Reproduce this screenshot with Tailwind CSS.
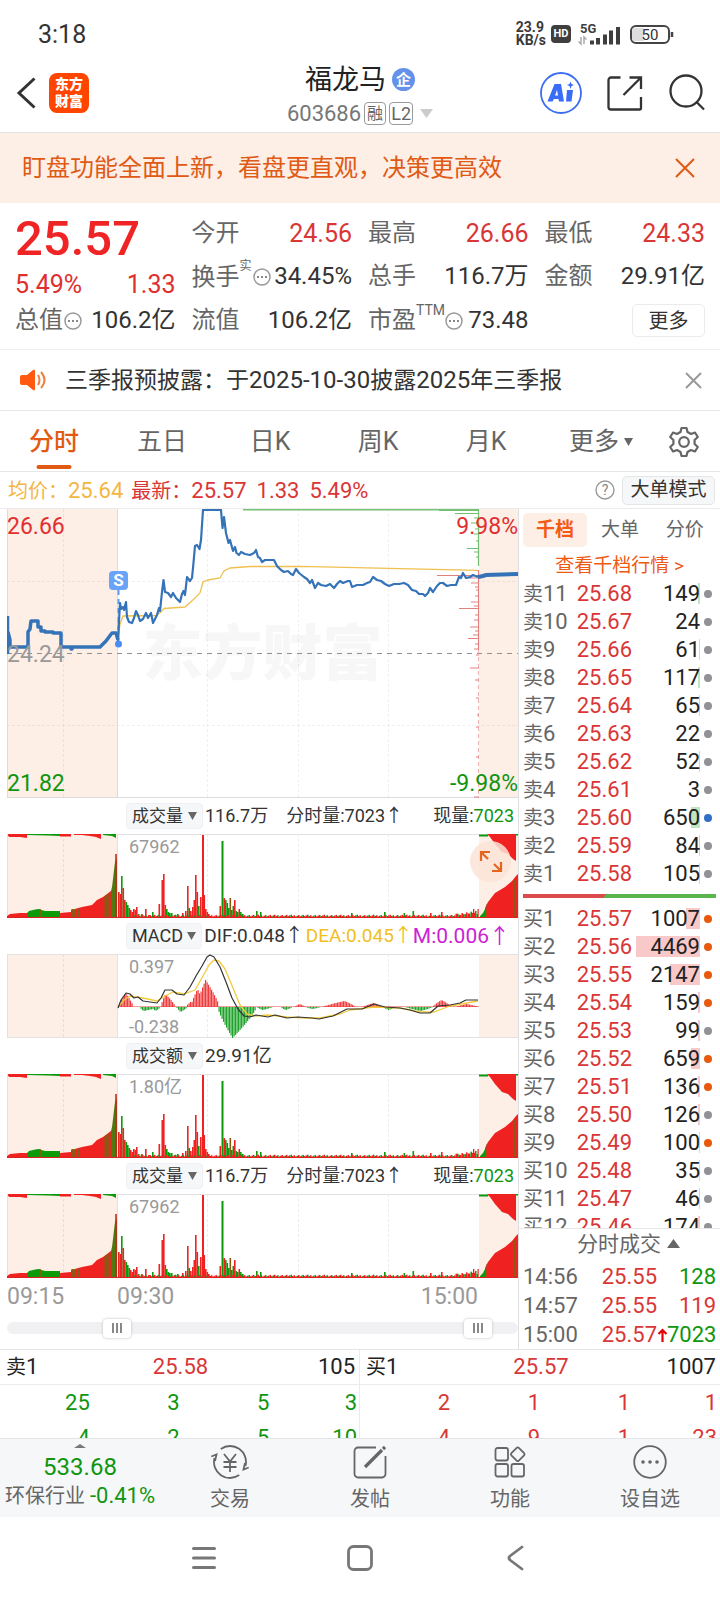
<!DOCTYPE html>
<html lang="zh-CN">
<head>
<meta charset="utf-8">
<meta name="viewport" content="width=device-width, initial-scale=1">
<title>福龙马 603686</title>
<script src="https://cdn.jsdelivr.net/npm/@tailwindcss/browser@4"></script>
</head>
<body class="bg-white text-[#333] font-['Roboto','Noto_Sans_CJK_SC',sans-serif]">
<div class="flex min-h-screen flex-col overflow-hidden">

<!-- Status bar -->
<div class="flex h-[54px] items-end justify-between pr-[45px] pl-[38px]">
  <span class="text-[25px] leading-[38px]">3:18</span>
  <div class="flex items-center gap-[5px] pb-[7px] text-[#3a3a3a]">
    <span class="text-[14px] leading-[13px] font-bold">23.9<br>KB/s</span>
    <span class="flex h-[18px] w-[20px] items-center justify-center rounded-[4px] bg-[#3f3f3f] text-[11px] font-bold text-white">HD</span>
    <svg class="ml-[1px] h-[24px] w-[46px]" viewBox="0 0 46 24" fill="#3f3f3f"><text x="3" y="11" font-size="13" font-weight="700" font-family="Roboto">5G</text><path d="M13 18.500h4v4h-4zM19 16h4v6.500h-4zM26 12.500h4v10h-4zM32 8.500h4v14h-4zM39 5h4v17.500h-4z"/><path d="M4 15v7l-2.500-2.500M7 22v-7l2.500 2.500" fill="none" stroke="#aaa" stroke-width="1.500"/></svg>
    <svg class="ml-[1px] h-[20px] w-[46px]" viewBox="0 0 46 20"><rect x="2" y="2" width="38" height="17" rx="5" fill="none" stroke="#444" stroke-width="2"/><path d="M6 4h9v13H6a3 3 0 0 1-3-3V7a3 3 0 0 1 3-3z" fill="#ddd"/><path d="M43 8v5" stroke="#444" stroke-width="2.500"/><text x="21" y="15.500" font-size="15" text-anchor="middle" fill="#333" font-family="Roboto">50</text></svg>
  </div>
</div>

<!-- Header -->
<header class="grid h-[79px] grid-cols-[1fr_auto_1fr] items-center border-b border-[#e4e4e6] pr-[15px] pl-[15px]">
  <div class="flex items-center gap-[13px]">
    <button aria-label="返回" class="h-[36px] w-[21px]"><svg viewBox="0 0 21 36" class="h-full w-full" fill="none" stroke="#333" stroke-width="3"><path d="M19.500 3.500 4 18l15.500 14.500"/></svg></button>
    <div class="flex h-[40px] w-[40px] items-center justify-center rounded-[8px] bg-[#ff4500] text-center text-[14px] leading-[17px] font-black text-white">东方<br>财富</div>
  </div>
  <div class="flex flex-col items-center pt-[5px]">
    <h1 class="flex items-center gap-[6px] text-[27px] leading-[36px] text-[#222]">福龙马<span class="flex h-[23px] w-[23px] items-center justify-center rounded-full bg-[#6591e8] text-[15px] leading-[20px] font-bold text-white">企</span></h1>
    <div class="flex items-center gap-[3px] text-[22px] leading-[32px] text-[#777]">603686
      <span class="flex h-[23px] w-[22px] items-center justify-center rounded-[4px] border border-[#999] text-[16px] leading-[20px] text-[#666]">融</span>
      <span class="flex h-[23px] w-[24px] items-center justify-center rounded-[4px] border border-[#999] text-[18px] leading-[20px] text-[#666]">L2</span>
      <svg class="ml-[4px] h-[10px] w-[13px]" viewBox="0 0 13 10"><path d="M0 0h13L6.500 9z" fill="#ccc"/></svg>
    </div>
  </div>
  <div class="flex items-center justify-end gap-[25px]">
    <button aria-label="AI" class="h-[42px] w-[42px]"><svg viewBox="0 0 42 42" class="h-full w-full"><circle cx="21" cy="21" r="20" fill="#fff" stroke="#3d6df2" stroke-width="1.800"/><path fill="#3a6cf8" fill-rule="evenodd" d="M14.500 12h6.500L24 29.500h-5l-.5-2.500h-4.500l-1.500 2.500H7.500zM17 18l-2 5.500h3z"/><path fill="#3a6cf8" d="M27 18h6l-1.500 11.500H26zM30.500 9.500l1 2.500 2.500 1-2.500 1-1 3-1-3-2.500-1 2.500-1z"/></svg></button>
    <button aria-label="分享" class="h-[36px] w-[36px]"><svg viewBox="0 0 36 36" class="h-full w-full" fill="none" stroke="#333" stroke-width="2.300"><path d="M13.500 2.500H4A2.500 2.500 0 0 0 1.500 5v27A2.500 2.500 0 0 0 4 34.500h28.500A1.500 1.500 0 0 0 34 33V22M22.500 2.500H34V14M34 2.500 16.500 20"/></svg></button>
    <button aria-label="搜索" class="h-[38px] w-[37px]"><svg viewBox="0 0 37 38" class="h-full w-full" fill="none" stroke="#333" stroke-width="2.300"><circle cx="18" cy="17" r="15.500"/><path d="m28 27.500 8 8"/></svg></button>
  </div>
</header>

<!-- Promo banner -->
<div class="flex h-[70px] items-center justify-between bg-[#fdeee6] pr-[25px] pl-[22px] text-[#e05a14]">
  <p class="text-[24px] leading-[34px]">盯盘功能全面上新，看盘更直观，决策更高效</p>
  <button aria-label="关闭横幅" class="h-[20px] w-[20px]"><svg viewBox="0 0 20 20" class="h-full w-full" stroke="currentColor" stroke-width="2"><path d="m1 1 18 18M19 1 1 19"/></svg></button>
</div>

<!-- Quote summary -->
<section class="grid h-[147px] grid-cols-4 grid-rows-[43px_44px_43px] gap-x-4 border-b border-[#eeeff1] px-[15px] pt-[9px] text-[24px] leading-[43px] text-[#333]">
  <div class="flex items-center pt-[10px] text-[49px] leading-[48px] font-medium text-[#ef2525]">25.57</div>
  <div class="flex justify-between"><span class="text-[#666]">今开</span><span class="text-[25px] text-[#d93636]">24.56</span></div>
  <div class="flex justify-between"><span class="text-[#666]">最高</span><span class="text-[25px] text-[#d93636]">26.66</span></div>
  <div class="flex justify-between"><span class="text-[#666]">最低</span><span class="text-[25px] text-[#d93636]">24.33</span></div>
  <div class="flex justify-between pt-[8px] text-[25px] text-[#e02f2f]"><span>5.49%</span><span>1.33</span></div>
  <div class="flex justify-between"><span class="flex items-center text-[#666]">换手<span class="mb-[22px] text-[12px] leading-[14px]">实</span><svg class="ml-[1px] h-[18px] w-[18px]" viewBox="0 0 18 18"><circle cx="9" cy="9" r="8" fill="none" stroke="#999" stroke-width="1.500"/><path d="M4 8h2v2H4zM8 8h2v2H8zM12 8h2v2h-2z" fill="#888"/></svg></span><span>34.45%</span></div>
  <div class="flex justify-between"><span class="text-[#666]">总手</span><span>116.7万</span></div>
  <div class="flex justify-between"><span class="text-[#666]">金额</span><span>29.91亿</span></div>
  <div class="flex justify-between"><span class="flex items-center text-[#666]">总值<svg class="ml-[1px] h-[18px] w-[18px]" viewBox="0 0 18 18"><circle cx="9" cy="9" r="8" fill="none" stroke="#999" stroke-width="1.500"/><path d="M4 8h2v2H4zM8 8h2v2H8zM12 8h2v2h-2z" fill="#888"/></svg></span><span>106.2亿</span></div>
  <div class="flex justify-between"><span class="text-[#666]">流值</span><span>106.2亿</span></div>
  <div class="flex justify-between"><span class="flex items-center text-[#666]">市盈<span class="mb-[22px] text-[14px] leading-[14px]">TTM</span><svg class="h-[18px] w-[18px]" viewBox="0 0 18 18"><circle cx="9" cy="9" r="8" fill="none" stroke="#999" stroke-width="1.500"/><path d="M4 8h2v2H4zM8 8h2v2H8zM12 8h2v2h-2z" fill="#888"/></svg></span><span>73.48</span></div>
  <div class="flex items-center justify-end"><button class="h-[33px] w-[73px] rounded-[5px] border border-[#ebebed] text-[20px] leading-[30px]">更多</button></div>
</section>

<!-- Notice -->
<div class="flex h-[61px] items-center border-b border-[#e6e7e9] pr-[18px] pl-[20px]">
  <svg class="h-[22px] w-[26px]" viewBox="0 0 26 22"><path d="M2 6h5l6-5q2-1 2 1v18q0 2-2 1l-6-5H2q-2 0-2-2V8q0-2 2-2z" fill="#ff5a10"/><path d="M18 6q3 5 0 10M21 3q7 8 0 16" fill="none" stroke="#f08040" stroke-width="2"/></svg>
  <a href="#" class="ml-[19px] flex-1 pt-[1px] text-[23px] leading-[34px] whitespace-nowrap">三季报预披露：于<span class="text-[24px]">2025-10-30</span>披露<span class="text-[24px]">2025</span>年三季报</a>
  <button aria-label="关闭公告" class="h-[17px] w-[17px]"><svg viewBox="0 0 17 17" class="h-full w-full" stroke="#999" stroke-width="2"><path d="m1 1 15 15M16 1 1 16"/></svg></button>
</div>

<!-- Period tabs -->
<nav class="grid h-[61px] grid-cols-[repeat(6,3fr)_2fr] border-b border-[#e6e7e9] text-[25px] leading-[62px] text-[#666]">
  <button class="relative font-medium text-[#e05a14]">分时<span class="absolute bottom-[4px] left-1/2 h-[4px] w-[35px] -translate-x-1/2 rounded bg-[#e05a14]"></span></button>
  <button>五日</button><button>日K</button><button>周K</button><button>月K</button>
  <button class="flex items-center justify-center gap-[5px] pl-[14px]">更多<svg class="h-[8px] w-[9px]" viewBox="0 0 9 8"><path d="M0 0h9L4.500 8z" fill="#666"/></svg></button>
  <button aria-label="设置" class="flex items-center justify-center"><svg class="h-[32px] w-[32px]" viewBox="0 0 32 32" fill="none" stroke="#666" stroke-width="2.200" stroke-linejoin="round"><path d="M13.500 2h5l1 4 3.500 2 4-1.500 2.800 4.500-3.200 3v4l3.200 3-2.800 4.500-4-1.500-3.500 2-1 4h-5l-1-4L9 24l-4 1.500L2.200 21l3.200-3v-4L2.200 11 5 6.500 9 8l3.500-2z"/><circle cx="16" cy="16" r="4.800"/></svg></button>
</nav>

<!-- Price line -->
<div class="flex h-[37px] items-center border-b border-[#ececee] pr-[5px] pl-[8px] text-[22px] whitespace-nowrap text-[#d93636]">
  <span class="text-[#f3b644]"><span class="text-[20px]">均价：</span>25.64</span>
  <span class="ml-[8px]"><span class="text-[20px]">最新：</span>25.57</span>
  <span class="ml-[10px]">1.33</span><span class="ml-[10px]">5.49%</span>
  <svg class="ml-auto h-[20px] w-[20px]" viewBox="0 0 20 20"><circle cx="10" cy="10" r="9" fill="none" stroke="#999" stroke-width="1.400"/><text x="10" y="15" font-size="14" text-anchor="middle" fill="#888" font-family="Roboto">?</text></svg>
  <button class="ml-[7px] h-[29px] w-[93px] rounded-[5px] border border-[#e4e6ea] bg-[#f6f7f9] text-[19px] leading-[26px] text-[#333]">大单模式</button>
</div>

<!-- Charts and order book -->
<main class="flex h-[840px]">
  <div class="min-w-0 flex-1 border-r border-[#dedfe2] pl-[7px]">

    <div class="relative h-[289px]">
      <div class="absolute inset-x-0 top-[108px] text-center text-[60px] leading-[76px] font-black text-[#f7f7f7]">东方财富</div>
      <svg class="relative h-full w-full" viewBox="7 509 511 289" preserveAspectRatio="none" fill="none">
        <path d="M7 509h111v288H7zM479 509h39v288h-39z" fill="#fdeee6"/>
        <path d="M63.500 509v288M207.500 509v288M298.500 509v288M388.500 509v288M7 581.500h511M7 725.500h511" stroke="#000" stroke-opacity=".06" stroke-dasharray="3 2"/>
        <path d="M7.500 509v288M117.500 509v288M7 797.500h511" stroke="#dcdcdc"/>
        <path d="M7 653.500h511" stroke="#909090" stroke-dasharray="5 5"/>
        <path d="M118 640l2-16 3-8 33-.5 5-3.500 3-3.500 21-1.500 9-8 6-6 3-11 5-2 12-2 4-7 6-3 20-1.500 50-.2 178 4" stroke="#efc04f" stroke-width="1.300"/>
        <path d="M243 509.500h236" stroke="#72c472" stroke-width="2"/>
        <path d="M478.500 509v57M439 510.500h40M455 513.500h24M474 518h5M471 523h8M475 529h4M474 534h5M476 541h3M467 548.500h12M474 552h5M476 557h3" stroke="#75bd75" stroke-width="1.200"/>
        <path d="M478.500 570v80M437 575.500h42M465 578h14M471 583h8M475 587h4M476 590h3M475 596h4M471 602h8M474 606h5M459 608.500h20M475 615h4M474 620h5M470 627h9M475 631h4M473 635h6M468 638.500h11M475 644h4M474 649h5M476 655h3M470 668h9M475 680h4M476 698h3M477 715h2M476 727h3M476 757h3M474 797h5" stroke="#e28080" stroke-width="1.100"/>
        <path d="M478.500 650v148" stroke="#e28080" stroke-opacity=".6" stroke-dasharray="4 3"/>
        <path d="M7.500 616v38M8 632l2 8v7h18v-15l2-3 1-8h7v6h3v4h4v1h8v1h8v14h10v2h1v-2h28l6-6 6-8h4l2 7" stroke="#3473b8" stroke-width="3.500" stroke-linejoin="round"/>
        <path d="M118.500 590v40" stroke="#5c9bf5" stroke-width="2" stroke-dasharray="5 4"/>
        <path d="M118 643L119 621 120 603 121 609 123 607 124 610 126 602 127 617 129 622 132 623 134 618 136 611 138 615 140 621 143 619 146 613 148 618 151 613 153 623 157 615 159 608 160 611 162 592 163.500 580 165 592 168 593 171 597 173 593 176 598 180 602 182 594 183.500 591 185 595 187 577 190 581 192 578 193 568 195 546 197 545 199.500 549 201 540 203 510H221L222.500 528 224 517 226 533 228.500 543 230 540 233 551 235 547 236.500 553 239 555 241 552 245 554 250 555 254 553 256 550 258 557 260 558 262 562 265 560 274 560 277 566 281 570 284 572 288 571 291 574 293 575 296 569 299 573 304 577 307 579 310 583 312 580 315 588 318 583 321 585 326 586 330 584 334 588 337 584 340 581 343 583 348 581 350 581 352 587 357 585 363 585 367 583 370 582 373 577 377 580 381 581 385 584 389 586 394 584 399 584 404 583 408 585 412 590 416 591 419 594 423 594 425 596 428 593 430 588 433 592 437 586 440 583 443 583 447 586 451 585 456 585 459 577 461 578 463 573 466 578 470 577 473 575 478 577" stroke="#3473b8" stroke-width="2.200" stroke-linejoin="round"/>
        <path d="M478 577l5-1 3-1 32-1" stroke="#3473b8" stroke-width="4"/>
        <circle cx="118.500" cy="644" r="3.500" fill="#4b8df2"/>
        <rect x="109" y="571" width="19" height="19" rx="4" fill="#69a4f8"/>
      </svg>
      <span class="absolute top-[62px] left-[102px] w-[19px] text-center text-[17px] leading-[19px] font-bold text-white">S</span>
      <div class="absolute top-[4px] left-0 text-[23px] leading-[28px] text-[#e03030]">26.66</div>
      <div class="absolute top-[4px] right-0 text-[23px] leading-[28px] text-[#e03030]">9.98%</div>
      <div class="absolute top-[132px] left-0 text-[23px] leading-[28px] text-[#999]">24.24</div>
      <div class="absolute bottom-0 left-0 text-[23px] leading-[28px] text-[#109510]">21.82</div>
      <div class="absolute right-0 bottom-0 text-[23px] leading-[28px] text-[#109510]">-9.98%</div>
    </div>

    <div class="flex h-[36px] items-center pr-[4px] pl-[119px] text-[18px] leading-[26px] whitespace-nowrap">
      <button class="flex h-[26px] w-[77px] items-center justify-between rounded-[4px] border border-[#eef0f3] bg-[#f6f7f9] px-[5px] text-[17px]">成交量<svg class="h-[8px] w-[9px]" viewBox="0 0 9 8"><path d="M0 0h9L4.500 8z" fill="#666"/></svg></button>
      <span class="ml-[2px]">116.7万</span><span class="ml-[18px]">分时量:7023↑</span><span class="ml-auto">现量:<span class="text-[#109510]">7023</span></span>
    </div>
    <div class="relative h-[84px]">
      <svg class="volume h-full w-full" viewBox="7 0 511 84" preserveAspectRatio="none"></svg>
      <span class="absolute top-[2px] left-[122px] text-[18px] leading-[22px] text-[#999]">67962</span>
      <button aria-label="全屏" class="absolute top-[7px] right-[7px] h-[41px] w-[41px] rounded-full bg-[#fbe3d6]/85"><svg viewBox="0 0 41 41" class="h-full w-full" fill="none" stroke="#e4651b" stroke-width="2.200"><path d="M11 20v-9h9M11 11l7 7M31 21v9h-9M31 30l-7-7"/></svg></button>
    </div>

    <div class="flex h-[36px] items-center pr-[8px] pl-[119px] text-[19px] leading-[26px] whitespace-nowrap">
      <button class="flex h-[26px] w-[77px] items-center justify-between rounded-[4px] border border-[#eef0f3] bg-[#f6f7f9] px-[5px] text-[18px]">MACD<svg class="h-[8px] w-[9px]" viewBox="0 0 9 8"><path d="M0 0h9L4.500 8z" fill="#666"/></svg></button>
      <span class="ml-[2px]">DIF:0.048↑</span><span class="ml-[2px] text-[#f0bf22]">DEA:0.045↑</span><span class="ml-auto text-[21px] text-[#cc22d4]">M:0.006↑</span>
    </div>
    <div class="relative h-[84px]">
      <svg class="h-full w-full" viewBox="7 954 511 84" preserveAspectRatio="none" fill="none">
        <path d="M7 954h111v84H7zM479 954h39v84h-39z" fill="#fdeee6"/>
        <path d="M63.500 954v84M207.500 954v84M298.500 954v84M388.500 954v84" stroke="#000" stroke-opacity=".07" stroke-dasharray="3 2"/>
        <path d="M7 954.500h511M7 1037.500h511M7.500 954v84M117.500 954v84" stroke="#e2e2e2"/>
        <g id="macd-bars"></g>
        <path d="M118 1007l6-7 6-4 13 2 14 3 8-5 8-4 11 2 11-4 8-14 6-11 5-5 5 1 6 8 8 19 7 17 7 9 9 2 12-1 19 2 18 1 15 0 20-4 10-4 24-3 26 1 20 4 14 0 16-6 28-5" stroke="#f2cb3c" stroke-width="1.300" stroke-linejoin="round"/>
        <path d="M118 1008l3-8 5-7 4 1 4 4 4-1 5 4 7 1 7 1 4-5 4-8 7 0 5 4 7 1 6-8 6-11 6-10 5-9 3-2 4 2 6 10 6 15 6 16 6 11 6 7 6 1 6-2 12 2 7-2 12 3 11-1 14 1 7 1 14-3 14-7 15 0 12-5 11 3 15 1 10 2 10 3 10 0 8-7 12-1 10-2 6-3 12 0" stroke="#333" stroke-width="1.200" stroke-linejoin="round"/>
      </svg>
      <span class="absolute top-[2px] left-[122px] text-[18px] leading-[22px] text-[#999]">0.397</span>
      <span class="absolute bottom-0 left-[122px] text-[18px] leading-[22px] text-[#999]">-0.238</span>
    </div>

    <div class="flex h-[36px] items-center pl-[119px] text-[19px] leading-[26px] whitespace-nowrap">
      <button class="flex h-[26px] w-[77px] items-center justify-between rounded-[4px] border border-[#eef0f3] bg-[#f6f7f9] px-[5px] text-[17px]">成交额<svg class="h-[8px] w-[9px]" viewBox="0 0 9 8"><path d="M0 0h9L4.500 8z" fill="#666"/></svg></button>
      <span class="ml-[2px]">29.91亿</span>
    </div>
    <div class="relative h-[84px]">
      <svg class="volume h-full w-full" viewBox="7 0 511 84" preserveAspectRatio="none"></svg>
      <span class="absolute top-[2px] left-[122px] text-[18px] leading-[22px] text-[#999]">1.80亿</span>
    </div>

    <div class="flex h-[36px] items-center pr-[4px] pl-[119px] text-[18px] leading-[26px] whitespace-nowrap">
      <button class="flex h-[26px] w-[77px] items-center justify-between rounded-[4px] border border-[#eef0f3] bg-[#f6f7f9] px-[5px] text-[17px]">成交量<svg class="h-[8px] w-[9px]" viewBox="0 0 9 8"><path d="M0 0h9L4.500 8z" fill="#666"/></svg></button>
      <span class="ml-[2px]">116.7万</span><span class="ml-[18px]">分时量:7023↑</span><span class="ml-auto">现量:<span class="text-[#109510]">7023</span></span>
    </div>
    <div class="relative h-[84px]">
      <svg class="volume h-full w-full" viewBox="7 0 511 84" preserveAspectRatio="none"></svg>
      <span class="absolute top-[2px] left-[122px] text-[18px] leading-[22px] text-[#999]">67962</span>
    </div>

    <div class="flex h-[38px] pr-[40px] text-[23px] leading-[38px] text-[#999]">
      <span class="w-[110px]">09:15</span><span>09:30</span><span class="ml-auto">15:00</span>
    </div>
    <div class="relative flex h-[24px] items-center">
      <div class="h-[12px] w-full rounded-full bg-[#f1f1f4]"></div>
      <input type="range" aria-label="开始时间" min="0" max="1000" value="198" class="pointer-events-none absolute inset-0 h-[24px] w-full appearance-none bg-transparent [&::-webkit-slider-thumb]:pointer-events-auto [&::-webkit-slider-thumb]:h-[19px] [&::-webkit-slider-thumb]:w-[28px] [&::-webkit-slider-thumb]:appearance-none [&::-webkit-slider-thumb]:rounded-[4px] [&::-webkit-slider-thumb]:bg-white [&::-webkit-slider-thumb]:bg-[linear-gradient(90deg,#888_2px,transparent_2px,transparent_4px,#888_4px,#888_6px,transparent_6px,transparent_8px,#888_8px)] [&::-webkit-slider-thumb]:bg-[length:10px_10px] [&::-webkit-slider-thumb]:bg-center [&::-webkit-slider-thumb]:bg-no-repeat [&::-webkit-slider-thumb]:shadow-[0_0_3px_#bbb]">
      <input type="range" aria-label="结束时间" min="0" max="1000" value="946" class="pointer-events-none absolute inset-0 h-[24px] w-full appearance-none bg-transparent [&::-webkit-slider-thumb]:pointer-events-auto [&::-webkit-slider-thumb]:h-[19px] [&::-webkit-slider-thumb]:w-[28px] [&::-webkit-slider-thumb]:appearance-none [&::-webkit-slider-thumb]:rounded-[4px] [&::-webkit-slider-thumb]:bg-white [&::-webkit-slider-thumb]:bg-[linear-gradient(90deg,#888_2px,transparent_2px,transparent_4px,#888_4px,#888_6px,transparent_6px,transparent_8px,#888_8px)] [&::-webkit-slider-thumb]:bg-[length:10px_10px] [&::-webkit-slider-thumb]:bg-center [&::-webkit-slider-thumb]:bg-no-repeat [&::-webkit-slider-thumb]:shadow-[0_0_3px_#bbb]">
    </div>
  </div>

  <!-- Order book -->
  <aside class="flex w-[201px] shrink-0 flex-col">
    <div class="grid h-[42px] shrink-0 grid-cols-3 items-center pr-[3px] pl-[4px] text-[19px] text-[#666]">
      <button class="h-[34px] w-[64px] rounded-[5px] bg-[#fdeee6] font-bold text-[#f55a14]">千档</button>
      <button>大单</button><button>分价</button>
    </div>
    <a href="#" class="h-[29px] shrink-0 text-center text-[19px] leading-[29px] text-[#ee5a14]">查看千档行情 &gt;</a>
    <table class="w-full table-fixed text-[22px] leading-[28px]"><tbody id="asks"></tbody></table>
    <div class="mx-[4px] mt-[6px] mb-[7px] flex h-[4px] shrink-0 bg-[#5bb54e]"><span class="w-[83px] bg-[#dc4b4b] [clip-path:polygon(0_0,100%_0,97%_100%,0_100%)]"></span></div>
    <div class="min-h-0 flex-1 overflow-hidden"><table class="w-full table-fixed text-[22px] leading-[28px]"><tbody id="bids"></tbody></table></div>
    <button class="flex h-[34px] shrink-0 items-start justify-center gap-[6px] border-t border-[#e6e7e9] pl-[18px] text-[21px] leading-[30px] text-[#666]">分时成交<svg class="mt-[10px] h-[9px] w-[13px]" viewBox="0 0 13 9"><path d="M0 9h13L6.500 0z" fill="#666"/></svg></button>
    <table class="w-full shrink-0 table-fixed text-[22px] leading-[29px] text-[#d93636]"><tbody>
      <tr><td class="w-[60px] pl-[4px] text-[#666]">14:56</td><td class="w-[78px] text-right">25.55</td><td class="pr-[4px] text-right text-[#109510]">128</td></tr>
      <tr><td class="pl-[4px] text-[#666]">14:57</td><td class="text-right">25.55</td><td class="pr-[4px] text-right">119</td></tr>
      <tr><td class="pl-[4px] text-[#666]">15:00</td><td class="text-right">25.57</td><td class="pr-[4px] text-[#109510]"><span class="flex items-center justify-between"><svg class="ml-[1px] h-[14px] w-[9px] shrink-0" viewBox="0 0 9 14" fill="none" stroke="#e60000" stroke-width="2.200"><path d="M4.500 14V2M.500 6l4-4 4 4"/></svg>7023</span></td></tr>
    </tbody></table>
  </aside>
</main>

<!-- Queue detail -->
<section class="grid h-[89px] grid-cols-2 overflow-hidden border-t border-[#e4e5e8] text-[22px] leading-[34px]">
  <div class="border-r border-[#eaebed]">
    <div class="grid grid-cols-3 border-b border-[#ebecee] pr-[4px] pl-[6px] text-[#222]"><span class="text-[20px]">卖<span class="text-[22px]">1</span></span><span class="text-center text-[#d93636]">25.58</span><span class="text-right">105</span></div>
    <table class="w-full table-fixed text-right leading-[35px] text-[#109510]"><tbody>
      <tr><td>25</td><td>3</td><td>5</td><td class="pr-[2px]">3</td></tr>
      <tr><td>4</td><td>2</td><td>5</td><td class="pr-[2px]">10</td></tr>
    </tbody></table>
  </div>
  <div>
    <div class="grid grid-cols-3 border-b border-[#ebecee] pr-[4px] pl-[6px] text-[#222]"><span class="text-[20px]">买<span class="text-[22px]">1</span></span><span class="text-center text-[#d93636]">25.57</span><span class="text-right">1007</span></div>
    <table class="w-full table-fixed text-right leading-[35px] text-[#d93636]"><tbody>
      <tr><td>2</td><td>1</td><td>1</td><td class="pr-[3px]">1</td></tr>
      <tr><td>4</td><td>9</td><td>1</td><td class="pr-[3px]">23</td></tr>
    </tbody></table>
  </div>
</section>

<!-- Bottom toolbar -->
<nav class="grid h-[79px] grid-cols-[8fr_7fr_7fr_7fr_7fr] border-t border-[#e2e4e8] bg-[#f6f7f9] text-[20px] leading-[28px] whitespace-nowrap text-[#666]">
  <button class="flex flex-col items-center pt-[5px]"><svg class="h-[4px] w-[12px] shrink-0" viewBox="0 0 12 4"><path d="M0 4h12L6 0z" fill="#777"/></svg><span class="pt-[5px] text-[24px] leading-[28px] text-[#109510]">533.68</span><span class="text-[20px] leading-[30px]">环保行业 <span class="text-[22px] text-[#109510]">-0.41%</span></span></button>
  <button class="flex flex-col items-center gap-[5px] pt-[5px]"><svg class="h-[36px] w-[38px]" viewBox="0 0 38 36" fill="none" stroke="#666" stroke-width="1.800"><path d="M9.800 4.900A16 16 0 0 1 34.500 22M28.200 31.100A16 16 0 0 1 3.500 14M.300 12.500l5.200-2-1.500 6.500M37.700 23.500l-5.200 2 1.500-6.500M13 10l6 7.500 6-7.500M12.500 18h13M12.500 23h13M19 17.500v10.500"/></svg>交易</button>
  <button class="flex flex-col items-center gap-[5px] pt-[5px]"><svg class="h-[36px] w-[36px]" viewBox="0 0 36 36" fill="none" stroke="#666" stroke-width="1.800"><path d="M24 3.500H6A3.500 3.500 0 0 0 2.500 7v23A3.500 3.500 0 0 0 6 33.500h24a3.500 3.500 0 0 0 3.500-3.500V12"/><path d="m13 23 17-17M31 5l2-2" stroke-width="3.200"/></svg>发帖</button>
  <button class="flex flex-col items-center gap-[5px] pt-[5px]"><svg class="h-[36px] w-[36px]" viewBox="0 0 36 36" fill="none" stroke="#666" stroke-width="1.800"><rect x="3.500" y="4" width="12.500" height="12.500" rx="2"/><rect x="3.500" y="20" width="12.500" height="12.500" rx="2"/><rect x="19.500" y="20" width="12.500" height="12.500" rx="2"/><rect x="20.500" y="5" width="10.500" height="10.500" rx="1.500" transform="rotate(45 25.750 10.250)"/></svg>功能</button>
  <button class="flex flex-col items-center gap-[5px] pt-[5px]"><svg class="h-[36px] w-[36px]" viewBox="0 0 36 36" fill="none" stroke="#666" stroke-width="1.800"><circle cx="18" cy="18" r="15.800"/><g fill="#666" stroke="none"><circle cx="11" cy="18" r="1.800"/><circle cx="18" cy="18" r="1.800"/><circle cx="25" cy="18" r="1.800"/></g></svg>设自选</button>
</nav>

<!-- System navigation -->
<div class="flex h-[82px] items-center justify-center gap-[130px]">
  <button aria-label="菜单" class="h-[26px] w-[26px]"><svg viewBox="0 0 26 26" class="h-full w-full" stroke="#777" stroke-width="3" stroke-linecap="round"><path d="M2.500 3.500h21M2.500 13h21M2.500 22.500h21"/></svg></button>
  <button aria-label="主页" class="h-[26px] w-[26px]"><svg viewBox="0 0 26 26" class="h-full w-full" fill="none" stroke="#777" stroke-width="2.800"><rect x="1.500" y="1.500" width="23" height="23" rx="5"/></svg></button>
  <button aria-label="后退" class="h-[26px] w-[26px]"><svg viewBox="0 0 26 26" class="h-full w-full" fill="none" stroke="#777" stroke-width="2.800" stroke-linecap="round" stroke-linejoin="round"><path d="M19 2 7 11q-2 2 0 4l12 9"/></svg></button>
</div>
</div>

<script>
const GREY = 'bg-[#919196]', ORANGE = 'bg-[#e8590c]', BLUE = 'bg-[#2f6fc4]';
// level, price, volume, depth bar width, dot
const asks = [[11,'25.68',149,2],[10,'25.67',24,0],[9,'25.66',61,1],[8,'25.65',117,2],[7,'25.64',65,1],[6,'25.63',22,0],[5,'25.62',52,1],[4,'25.61',3,0],[3,'25.60',650,9,BLUE],[2,'25.59',84,1],[1,'25.58',105,1]];
const bids = [[1,'25.57',1007,14,ORANGE],[2,'25.56',4469,64,ORANGE],[3,'25.55',2147,30,ORANGE],[4,'25.54',159,2,ORANGE],[5,'25.53',99,2],[6,'25.52',659,9,ORANGE],[7,'25.51',136,2,ORANGE],[8,'25.50',126,2],[9,'25.49',100,1,ORANGE],[10,'25.48',35,1],[11,'25.47',46,1],[12,'25.46',174,2]];
const rows = (list, side, tint) => list.map(([n, p, v, w, dot]) => `<tr><td class="w-[50px] pl-[4px] whitespace-nowrap text-[#666]"><span class="text-[20px] leading-[20px]">${side}</span>${n}</td><td class="w-[63px] text-right text-[#d93636]">${p}</td><td class="w-[68px] text-right text-[#222]"><div class="relative h-[28px]"><span class="absolute top-[3px] right-0 h-[21px] ${tint}" style="width:${w}px"></span><span class="relative">${v}</span></div></td><td class="pl-[4px]"><div class="h-[8px] w-[8px] rounded-full ${dot || GREY}"></div></td></tr>`).join('');
document.getElementById('asks').innerHTML = rows(asks, '卖', 'bg-[#c0e6c0]');
document.getElementById('bids').innerHTML = rows(bids, '买', 'bg-[#f9c8c8]');

const R = '#f02121', G = '#0a9a0a', M = '#8a5a14';
const bar = (x, h, c, w = 1.5) => `<rect x="${x}" y="${84 - h}" width="${w}" height="${h}" fill="${c}"/>`;
const area = (pts, c, base = 84) => `<path d="M${pts[0][0]} ${base}${pts.map(([x, h]) => `L${x} ${base ? base - h : h}`).join('')}L${pts[pts.length - 1][0]} ${base}z" fill="${c}"/>`;
let v = '<path d="M7 0h111v84H7zM479 0h39v84h-39z" fill="#fdeee6"/><path d="M63.500 0v84M207.500 0v84M298.500 0v84M388.500 0v84" stroke="#000" stroke-opacity=".07" stroke-dasharray="3 2"/><path d="M7 .5h511M7.500 0v84M117.500 0v84" stroke="#e2e2e2" fill="none"/>';
v += area([[7,2],[10,4],[20,5],[27,5]], R) + area([[27,5],[29,7],[33,8],[38,9],[45,7],[60,7]], G) + area([[60,5],[71,6],[71,8],[82,11],[92,13],[97,18],[103,21],[111,27]], R);
for (const x of [39,71.5,74,78]) v += bar(x, 9, M, 1.8);
for (let x = 103; x < 111; x += 2.6) v += bar(x, 21 + (x - 103) * .7, M, 1.6);
v += area([[111,27],[112,31],[113,39],[114,48],[115,56],[117,60]], '#4f7a10');
v += bar(115.2, 64, '#c22b1b', 1.6);
v += area([[8,1.5],[9,3],[20,3],[27,4],[27,0]], R, 0) + area([[27,1],[48,1.5],[60,2],[60,0]], G, 0) + area([[60,2.5],[71,2.5],[71,0]], R, 0) + area([[74,1],[82,1],[90,2],[96,3],[101,5],[101,0]], R, 0) + area([[103,1],[112,2],[116,4],[116,0]], G, 0);
const spikes = [[118,26,R],[119.5,24,R],[121,42,G],[122.5,30,R],[124,18,R],[125.5,16,G],[127,13,G],[128.5,10,G],[130,8,R],[131.5,6,R],[133,9,R],[134.5,8,R],[136,11,R],[138,4,G],[141,4,G],[145,9,R],[148,3,R],[152,6,G],[158.5,14,R],[161.5,38,R],[163,44,R],[164.5,13,R],[166,9,G],[167.5,6,G],[169,5,G],[171,5,G],[174,3,G],[177,4,G],[182,5,R],[185,7,R],[187,32,R],[188.5,10,G],[190,7,R],[192,11,R],[193.5,18,R],[195,43,R],[196.5,26,R],[198,12,G],[200,21,R],[202,83,R],[203.5,23,R],[205,9,R],[206.5,6,R],[208,4,R],[219.5,12,R],[221.5,77,G],[223.5,20,R],[225,18,G],[226.5,15,G],[228,10,G],[229.5,20,M],[231,8,G],[232.5,12,G],[234,18,R],[235.5,7,G],[237,6,G],[238.5,9,R],[240,6,G],[242,4,G],[256,7,G],[260,6,G],[351,5,G],[384,6,G],[403.5,5,G],[412.5,7,G],[430,5,R],[441,6,R]];
spikes.forEach(([x, h, c]) => v += bar(x, h, c, x === 202 || x === 221.5 ? 2 : 1.6));
for (let i = 0, x = 130; x < 478; i++, x += 1.5) {
  const h = 1.6 + ((i * 37) % 11) / 6 + (x > 455 ? (x - 455) / 9 + (i % 3) : 0);
  v += bar(x, h, (i * 29 + (i >> 2)) % 9 < (x > 208 && x < 218 ? 9 : 4) ? R : G);
}
v += bar(473, 9, R, 1.3) + bar(477.5, 9, R, 1.2);
v += area([[480,2],[483,5],[488,15]], G) + area([[485,10],[488,16],[495,25],[505,31],[512,37],[516,42],[518,44]], R) + bar(486.5, 14, M, 1.5) + bar(514, 38, M, 2);
v += area([[487,0],[490,3],[495,10],[502,18],[508,20],[513,25],[516,27],[516,0]], R, 0) + '<path d="M479 1.500h9M516 .5h2" stroke="#0a9a0a" stroke-width="2"/><path d="M7 83.500h511" stroke="#e02020"/>';
document.querySelectorAll('.volume').forEach(s => s.innerHTML = v);

// MACD histogram humps: start, end, peak, height (negative is below zero)
const humps = [[118,133,125,14],[139,159,143,-4],[151,160,155,-4],[160,175,165,13],[176,187,180,-5],[185,195,190,5],[190,204,197,18],[196,219,205,27],[217,256,232,-31],[256,272,262,-3],[280,292,285,-3],[294,305,299,3],[305,320,312,-2],[322,355,344,6],[362,382,373,4],[382,396,388,-3],[405,432,420,-4],[432,451,441,7],[455,478,466,3]];
let m = '<path d="M118 1006.500h361" stroke="#e88" stroke-width=".8"/>';
for (let x = 118; x < 478; x += 1.5) {
  let h = 0;
  for (const [a, b, p, k] of humps) if (x > a && x < b) { const t = k * Math.pow(x < p ? (x - a) / (p - a) : (b - x) / (b - p), .8); if (Math.abs(t) > Math.abs(h)) h = t; }
  if (h) m += `<rect x="${x}" y="${h > 0 ? 1007 - h : 1007}" width="1.2" height="${Math.abs(h)}" fill="${h > 0 ? '#ee3b3b' : '#1fa32a'}"/>`;
}
document.getElementById('macd-bars').innerHTML = m;
</script>
</body>
</html>
